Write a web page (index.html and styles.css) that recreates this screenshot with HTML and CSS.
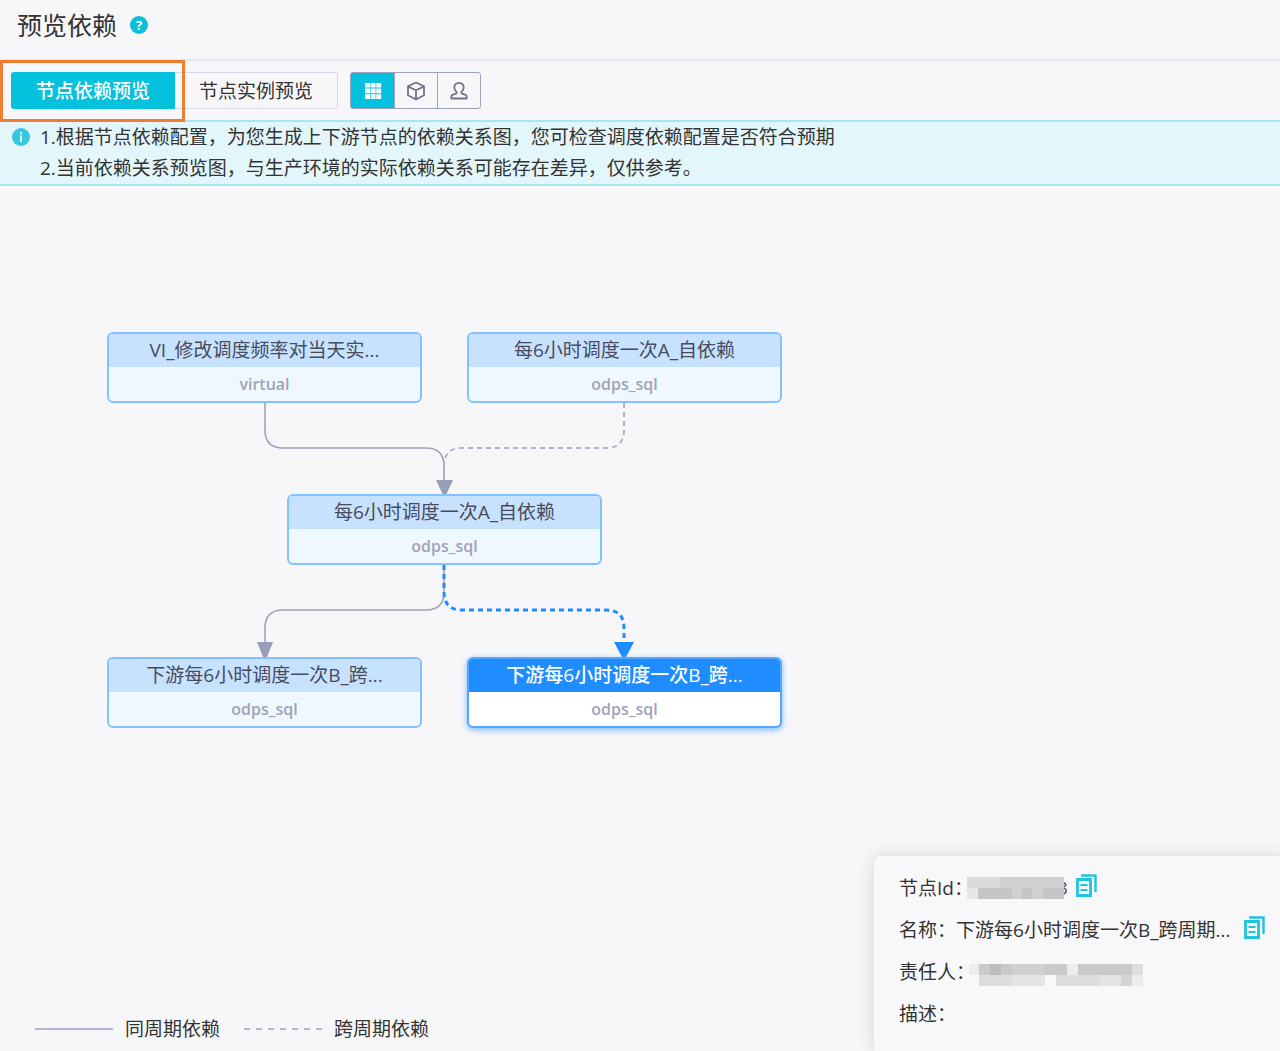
FILE: index.html
```html
<!DOCTYPE html>
<html lang="zh-CN">
<head>
<meta charset="utf-8">
<meta name="viewport" content="width=device-width, initial-scale=1">
<title>预览依赖</title>
<link rel="stylesheet" href="styles.css">
</head>
<body>
<div class="page">
  <header class="header">
    <h1 class="title">预览依赖</h1>
    <button class="help" type="button" aria-label="帮助">?</button>
  </header>

  <div class="toolbar">
    <div class="tabs">
      <button class="tab tab-active" type="button">节点依赖预览</button>
      <button class="tab" type="button">节点实例预览</button>
      <span class="marker"></span>
    </div>
    <div class="views">
      <button class="view view-active" type="button" aria-label="网格">
        <svg width="18" height="18" viewBox="0 0 18 18" fill="#fff"><path d="M1 1h5v4.600H1zM6.600 1h5v4.600h-5zM12.200 1h5v4.600h-5zM1 6.600h5v4.600H1zM6.600 6.600h5v4.600h-5zM12.200 6.600h5v4.600h-5zM1 12.200h5v4.800H1zM6.600 12.200h5v4.800h-5zM12.200 12.200h5v4.800h-5z"/></svg>
      </button>
      <button class="view" type="button" aria-label="模块">
        <svg width="20" height="20" viewBox="0 0 20 20" fill="none" stroke="#6f7389" stroke-width="1.800" stroke-linejoin="round"><path d="M10 1.500 18 5.300v9L10 18.500 2 14.300v-9zM2.300 5.600 10 9.300l7.700-3.700M10 9.300v9"/></svg>
      </button>
      <button class="view" type="button" aria-label="责任人">
        <svg width="20" height="20" viewBox="0 0 20 20" fill="none" stroke="#6f7389" stroke-width="1.800" stroke-linejoin="round"><path d="M10 1.800c-3 0-4.700 2-4.700 4.600 0 2 .9 3.200 2.200 4.400v1.600L3.500 13.800c-.8.400-1.100 1-1.100 1.700v2h15.200v-2c0-.7-.3-1.300-1.100-1.700l-4-1.400v-1.600c1.300-1.200 2.200-2.400 2.200-4.400 0-2.600-1.700-4.600-4.700-4.600z"/></svg>
      </button>
    </div>
  </div>

  <div class="notice">
    <svg class="notice-icon" width="18" height="18" viewBox="0 0 18 18"><circle cx="9" cy="9" r="9" fill="#34c8e0"/><path d="M8 4h2v2.200H8zM8 7.500h2V14H8z" fill="#e3f6fb"/></svg>
    <div class="notice-text">
      <p>1.根据节点依赖配置，为您生成上下游节点的依赖关系图，您可检查调度依赖配置是否符合预期</p>
      <p>2.当前依赖关系预览图，与生产环境的实际依赖关系可能存在差异，仅供参考。</p>
    </div>
  </div>

  <main class="canvas">
    <svg class="edges" width="800" height="560" viewBox="0 0 800 560" fill="none">
      <g stroke="#9ea3bd" stroke-width="1.600">
        <path d="M265 217v27q0 18 18 18h143q18 0 18 18v16"/>
        <path d="M624 217v27q0 18-18 18H462q-18 0-18 18v16" stroke="#b0b3c8" stroke-width="2" stroke-dasharray="5 4"/>
        <path d="M444 379v27q0 18-18 18H283q-18 0-18 18v16"/>
      </g>
      <path d="M444 379v27q0 18 18 18h144q18 0 18 18v16" stroke="#1f8cff" stroke-width="3" stroke-dasharray="5 4"/>
      <path d="M436 294h17l-7 15h-3zM257 456h16l-6 15h-4z" fill="#989db8"/>
      <path d="M614 456h20l-8 15h-4z" fill="#1f8cff"/>
    </svg>
    <div class="node node-parent-a"><div class="node-name">VI_修改调度频率对当天实...</div><div class="node-type">virtual</div></div>
    <div class="node node-parent-b"><div class="node-name">每6小时调度一次A_自依赖</div><div class="node-type">odps_sql</div></div>
    <div class="node node-middle"><div class="node-name">每6小时调度一次A_自依赖</div><div class="node-type">odps_sql</div></div>
    <div class="node node-child-a"><div class="node-name">下游每6小时调度一次B_跨...</div><div class="node-type">odps_sql</div></div>
    <div class="node node-child-b node-selected"><div class="node-name">下游每6小时调度一次B_跨...</div><div class="node-type">odps_sql</div></div>

    <div class="legend">
      <span class="legend-item"><svg width="78" height="2"><path d="M0 1h78" stroke="#b0b5d0" stroke-width="2"/></svg>同周期依赖</span>
      <span class="legend-item"><svg width="78" height="2"><path d="M0 1h78" stroke="#b0b5d0" stroke-width="2" stroke-dasharray="6 6"/></svg>跨周期依赖</span>
    </div>

    <aside class="detail">
      <div class="row">
        <span>节点Id：</span>
        <svg class="redacted" width="101" height="24" viewBox="0 0 101 24">
          <text class="redacted-tail" x="90" y="19">3</text>
          <path d="M0 1h97v22H0z" fill="#d0d0d2"/><path d="M0 1h33v11H0z" fill="#dbdbdd"/><path d="M0 12h11v11H0z" fill="#e7e7e9"/><path d="M11 12h34v11H11zM55 12h10v11H55zM76 12h21v11H76z" fill="#c5c5c8"/>
        </svg>
        <button class="copy" type="button" aria-label="复制节点Id"><svg width="21" height="23" viewBox="0 0 21 23" fill="none" stroke="#1fc4df"><path d="M5 1.500h14.500V18" stroke-width="2.400"/><path d="M1.500 5.500h13v16h-13z" stroke-width="2.800"/><path d="M4.500 11h7M4.500 16h7" stroke-width="1.800"/></svg></button>
      </div>
      <div class="row">
        <span>名称：</span>
        <span class="name-value">下游每6小时调度一次B_跨周期...</span>
        <button class="copy" type="button" aria-label="复制名称"><svg width="21" height="23" viewBox="0 0 21 23" fill="none" stroke="#1fc4df"><path d="M5 1.500h14.500V18" stroke-width="2.400"/><path d="M1.500 5.500h13v16h-13z" stroke-width="2.800"/><path d="M4.500 11h7M4.500 16h7" stroke-width="1.800"/></svg></button>
      </div>
      <div class="row">
        <span>责任人：</span>
        <svg class="redacted" width="174" height="28" viewBox="0 -6 174 28">
          <path d="M0 0h10v11H0zM98 0h11v11H98z" fill="#ececee"/><path d="M10 0h88v11H10z" fill="#cacacd"/><path d="M21 0h11v11H21z" fill="#bcbcbf"/><path d="M43 0h33v11H43z" fill="#d0d0d3"/><path d="M109 0h54v11h-54z" fill="#cacacd"/><path d="M163 0h11v11h-11z" fill="#dedee0"/>
          <path d="M10 11h33v11H10zM87 11h44v11H87z" fill="#dcdcde"/><path d="M43 11h33v11H43zM131 11h21v11h-21z" fill="#e4e4e6"/><path d="M152 11h11v11h-11z" fill="#d4d4d7"/><path d="M163 11h11v11h-11z" fill="#ececee"/>
        </svg>
      </div>
      <div class="row"><span>描述：</span></div>
    </aside>
  </main>
</div>
</body>
</html>
```
FILE: styles.css
```css
* {
  box-sizing: border-box;
}

body {
  margin: 0;
  background: #f7f7f9;
  color: #333;
  font-family: "Open Sans", "Noto Sans CJK SC", sans-serif;
  font-size: 19px;
  line-height: 32px;
}

button {
  padding: 0;
  border: 0;
  background: none;
  color: inherit;
  font: inherit;
  cursor: pointer;
}

svg {
  display: block;
  flex: none;
}

.page {
  display: flex;
  flex-direction: column;
  min-height: 100vh;
}

.header {
  display: flex;
  align-items: center;
  gap: 13px;
  padding: 9px 17px 18px;
  border-bottom: 2px solid #e6e7f1;
}

.title {
  margin: 0;
  font-size: 25px;
  font-weight: 400;
  line-height: 32px;
}

.help {
  width: 18px;
  height: 18px;
  border-radius: 50%;
  background: #0bbfdb;
  color: #fff;
  font-size: 13px;
  font-weight: 700;
  line-height: 18px;
}

.toolbar {
  display: flex;
  gap: 12px;
  padding: 11px;
}

.tabs {
  display: flex;
  position: relative;
}

.tab {
  height: 37px;
  padding: 0 24px;
  border: 1px solid #d5d8e8;
  border-left: 0;
  border-radius: 0 3px 3px 0;
}

.tab-active {
  padding: 0 25px;
  border: 0;
  border-radius: 3px 0 0 3px;
  background: #04c1de;
  color: #fff;
  font-weight: 500;
}

.marker {
  position: absolute;
  top: -12px;
  left: -11px;
  width: 185px;
  height: 62px;
  border: 3px solid #ed7d31;
  pointer-events: none;
}

.views {
  display: flex;
  border: 1px solid #9da2c0;
  border-radius: 3px;
}

.view {
  display: flex;
  align-items: center;
  justify-content: center;
  width: 43px;
}

.view + .view {
  border-left: 1px solid #9da2c0;
}

.view-active {
  background: #04c1de;
}

.notice {
  display: flex;
  gap: 10px;
  padding: 0 12px;
  border: solid #a6e8f1;
  border-width: 2px 0;
  background: #e3f6fb;
}

.notice-icon {
  margin-top: 6px;
}

.notice p {
  margin: 0;
  line-height: 31px;
}

.canvas {
  position: relative;
  flex: 1;
  min-height: 860px;
  overflow: hidden;
}

.edges {
  position: absolute;
  top: 0;
  left: 0;
}

.node {
  position: absolute;
  width: 315px;
  border: 2px solid #84c1ff;
  border-radius: 6px;
  background: #eff7ff;
  overflow: hidden;
  text-align: center;
}

.node-name {
  background: #c6e2ff;
  color: #474b5c;
  line-height: 33px;
}

.node-type {
  color: #a0a3ba;
  font-size: 16px;
  font-weight: 600;
  line-height: 34px;
}

.node-parent-a {
  top: 146px;
  left: 107px;
}

.node-parent-b {
  top: 146px;
  left: 467px;
}

.node-middle {
  top: 308px;
  left: 287px;
}

.node-child-a {
  top: 471px;
  left: 107px;
}

.node-child-b {
  top: 471px;
  left: 467px;
}

.node-selected {
  border-color: #56a8ff;
  background: #fff;
  box-shadow: 0 2px 6px #78b8ff;
}

.node-selected .node-name {
  background: #1f8cff;
  color: #fff;
  font-weight: 500;
}

.legend {
  position: absolute;
  bottom: 6px;
  left: 35px;
  display: flex;
  gap: 24px;
}

.legend-item {
  display: flex;
  align-items: center;
  gap: 12px;
}

.detail {
  position: absolute;
  right: 0;
  bottom: 0;
  width: 407px;
  padding: 11px 15px 16px 25px;
  border: solid #e6e8f4;
  border-width: 1px 0 0 1px;
  border-radius: 8px 0 0 0;
  background: #f8f8fa;
  box-shadow: 0 0 16px #d8d8dd;
}

.row {
  display: flex;
  align-items: center;
  height: 42px;
}

.redacted {
  margin-left: -6px;
}

.redacted-tail {
  fill: #555;
}

.name-value {
  flex: 1;
}

.copy {
  margin-left: 8px;
  padding-bottom: 6px;
}
```
